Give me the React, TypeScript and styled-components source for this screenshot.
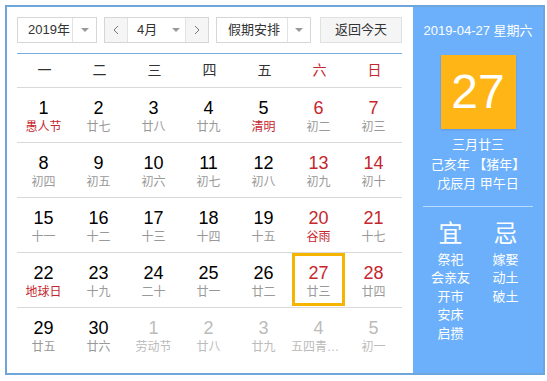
import React, { FC } from 'react';
import styled, { createGlobalStyle } from 'styled-components';

const GlobalStyle = createGlobalStyle`
  html, body {
    margin: 0;
    padding: 0;
    background: #fff;
  }
  body {
    font-family: Arial, 'Liberation Sans', 'Noto Sans CJK SC', sans-serif;
    color: #333;
  }
`;

interface Day {
  d: number;
  l: string;
  red?: boolean;
  lred?: boolean;
  other?: boolean;
  sel?: boolean;
}

const weeks: Day[][] = [
  [
    { d: 1, l: '愚人节', lred: true },
    { d: 2, l: '廿七' },
    { d: 3, l: '廿八' },
    { d: 4, l: '廿九' },
    { d: 5, l: '清明', lred: true },
    { d: 6, l: '初二', red: true },
    { d: 7, l: '初三', red: true },
  ],
  [
    { d: 8, l: '初四' },
    { d: 9, l: '初五' },
    { d: 10, l: '初六' },
    { d: 11, l: '初七' },
    { d: 12, l: '初八' },
    { d: 13, l: '初九', red: true },
    { d: 14, l: '初十', red: true },
  ],
  [
    { d: 15, l: '十一' },
    { d: 16, l: '十二' },
    { d: 17, l: '十三' },
    { d: 18, l: '十四' },
    { d: 19, l: '十五' },
    { d: 20, l: '谷雨', red: true, lred: true },
    { d: 21, l: '十七', red: true },
  ],
  [
    { d: 22, l: '地球日', lred: true },
    { d: 23, l: '十九' },
    { d: 24, l: '二十' },
    { d: 25, l: '廿一' },
    { d: 26, l: '廿二' },
    { d: 27, l: '廿三', red: true, sel: true },
    { d: 28, l: '廿四', red: true },
  ],
  [
    { d: 29, l: '廿五' },
    { d: 30, l: '廿六' },
    { d: 1, l: '劳动节', other: true },
    { d: 2, l: '廿八', other: true },
    { d: 3, l: '廿九', other: true },
    { d: 4, l: '五四青年节', other: true },
    { d: 5, l: '初一', other: true },
  ],
];

const weekNames = ['一', '二', '三', '四', '五', '六', '日'];

const Frame = styled.div`
  margin: 5px 0 0 5px;
  width: 536px;
  height: 366px;
  border: 2px solid #6ea5dd;
  display: flex;
`;

const Main = styled.div`
  width: 385px;
  padding: 10px 11px 0 10px;
  background: #fff;
`;

const Toolbar = styled.div`
  display: flex;
  gap: 7px;
  height: 26px;
  font-size: 13px;
`;

const Box = styled.div<{ $w: number }>`
  display: flex;
  width: ${p => p.$w}px;
  height: 26px;
  box-sizing: border-box;
  border: 1px solid #d6d6d6;
  background: #fff;
`;

const SelectText = styled.div<{ $w: number; $pad: number }>`
  width: ${p => p.$w}px;
  padding-left: ${p => p.$pad}px;
  box-sizing: border-box;
  line-height: 24px;
  color: #333;
`;

const ArrowCell = styled.div<{ $divider?: boolean; $w: number }>`
  width: ${p => p.$w}px;
  box-sizing: border-box;
  display: flex;
  align-items: center;
  justify-content: center;
  border-left: ${p => (p.$divider ? '1px solid #e2e2e2' : 'none')};
  &::after {
    content: '';
    border-left: 4px solid transparent;
    border-right: 4px solid transparent;
    border-top: 4px solid #999;
  }
`;

const NavButton = styled.div<{ $side: 'left' | 'right' }>`
  width: 23px;
  box-sizing: border-box;
  background: #f5f5f5;
  display: flex;
  align-items: center;
  justify-content: center;
  border-${p => (p.$side === 'left' ? 'right' : 'left')}: 1px solid #e2e2e2;
`;

const TodayButton = styled.div`
  margin-left: auto;
  width: 82px;
  height: 26px;
  box-sizing: border-box;
  border: 1px solid #e0e0e0;
  background: #f5f5f5;
  line-height: 24px;
  text-align: center;
  color: #333;
`;

const BlueRule = styled.div`
  margin-top: 10px;
  height: 1px;
  background: #79aee5;
`;

const Grid = styled.div`
  display: grid;
  grid-template-columns: repeat(7, 55px);
`;

const HeadCell = styled.div<{ $red?: boolean }>`
  height: 33px;
  line-height: 33px;
  text-align: center;
  font-size: 14px;
  color: ${p => (p.$red ? '#c6262e' : '#333')};
  border-bottom: 1px solid #d9d9d9;
`;

const Cell = styled.div<{ $last?: boolean }>`
  height: 54px;
  border-bottom: ${p => (p.$last ? 'none' : '1px solid #d9d9d9')};
`;

const CellInner = styled.div<{ $sel?: boolean }>`
  width: 53px;
  height: 53px;
  box-sizing: border-box;
  border: 3px solid ${p => (p.$sel ? '#f4b400' : 'transparent')};
  padding-top: 7px;
  text-align: center;
`;

const Num = styled.div<{ $tone: 'normal' | 'red' | 'other' }>`
  font-size: 18px;
  line-height: 20px;
  color: ${p => (p.$tone === 'red' ? '#c6262e' : p.$tone === 'other' ? '#bbb' : '#000')};
`;

const Lunar = styled.div<{ $tone: 'normal' | 'red' | 'other' }>`
  margin: 0 -4px;
  font-size: 12px;
  line-height: 18px;
  white-space: nowrap;
  overflow: hidden;
  text-overflow: ellipsis;
  color: ${p => (p.$tone === 'red' ? '#c6262e' : p.$tone === 'other' ? '#bbb' : '#999')};
`;

const Side = styled.div`
  flex: 1;
  background: #6cb0fb;
  color: #fff;
  display: flex;
  flex-direction: column;
  align-items: center;
  padding-top: 15px;
  font-size: 13px;
`;

const DateLine = styled.div`
  line-height: 18px;
`;

const BigDay = styled.div`
  margin-top: 15px;
  width: 75px;
  height: 74px;
  background: #ffb515;
  box-shadow: 0 1px 2px rgba(0, 0, 0, 0.15);
  font-size: 48px;
  line-height: 74px;
  text-align: center;
  color: #fff;
`;

const InfoLines = styled.div`
  margin-top: 6px;
  line-height: 19.5px;
  text-align: center;
`;

const SideRule = styled.div`
  margin-top: 12px;
  width: 110px;
  height: 1px;
  background: rgba(255, 255, 255, 0.55);
`;

const Almanac = styled.div`
  margin-top: 13px;
  display: flex;
`;

const AlmanacCol = styled.div`
  width: 55px;
  display: flex;
  flex-direction: column;
  align-items: center;
`;

const AlmanacTitle = styled.div`
  font-size: 24px;
  line-height: 28px;
  margin-bottom: 3px;
`;

const AlmanacItem = styled.div`
  line-height: 18.6px;
  white-space: nowrap;
`;

const Chevron: FC<{ dir: 'left' | 'right' }> = ({ dir }) => (
  <svg width="6" height="10" viewBox="0 0 6 10">
    <path
      d={dir === 'left' ? 'M5 1L1 5l4 4' : 'M1 1l4 4-4 4'}
      fill="none"
      stroke="#777"
      strokeWidth="1"
    />
  </svg>
);

const toneOf = (day: Day, lunar: boolean): 'normal' | 'red' | 'other' => {
  if (day.other) return 'other';
  if (lunar) return day.lred ? 'red' : 'normal';
  return day.red ? 'red' : 'normal';
};

const App: FC = () => (
  <>
    <GlobalStyle />
    <Frame>
      <Main>
        <Toolbar>
          <Box $w={80}>
            <SelectText $w={54} $pad={10}>2019年</SelectText>
            <ArrowCell $divider $w={24} />
          </Box>
          <Box $w={105}>
            <NavButton $side="left">
              <Chevron dir="left" />
            </NavButton>
            <SelectText $w={38} $pad={9}>4月</SelectText>
            <ArrowCell $w={19} />
            <NavButton $side="right">
              <Chevron dir="right" />
            </NavButton>
          </Box>
          <Box $w={95}>
            <SelectText $w={70} $pad={11}>假期安排</SelectText>
            <ArrowCell $divider $w={23} />
          </Box>
          <TodayButton>返回今天</TodayButton>
        </Toolbar>
        <BlueRule />
        <Grid>
          {weekNames.map((w, i) => (
            <HeadCell key={w} $red={i >= 5}>
              {w}
            </HeadCell>
          ))}
          {weeks.map((week, wi) =>
            week.map((day, di) => (
              <Cell key={`${wi}-${di}`} $last={wi === weeks.length - 1}>
                <CellInner $sel={day.sel}>
                  <Num $tone={toneOf(day, false)}>{day.d}</Num>
                  <Lunar $tone={toneOf(day, true)}>{day.l}</Lunar>
                </CellInner>
              </Cell>
            )),
          )}
        </Grid>
      </Main>
      <Side>
        <DateLine>2019-04-27 星期六</DateLine>
        <BigDay>27</BigDay>
        <InfoLines>
          <div>三月廿三</div>
          <div>己亥年 【猪年】</div>
          <div>戊辰月 甲午日</div>
        </InfoLines>
        <SideRule />
        <Almanac>
          <AlmanacCol>
            <AlmanacTitle>宜</AlmanacTitle>
            {['祭祀', '会亲友', '开市', '安床', '启攒'].map(t => (
              <AlmanacItem key={t}>{t}</AlmanacItem>
            ))}
          </AlmanacCol>
          <AlmanacCol>
            <AlmanacTitle>忌</AlmanacTitle>
            {['嫁娶', '动土', '破土'].map(t => (
              <AlmanacItem key={t}>{t}</AlmanacItem>
            ))}
          </AlmanacCol>
        </Almanac>
      </Side>
    </Frame>
  </>
);

export default App;
